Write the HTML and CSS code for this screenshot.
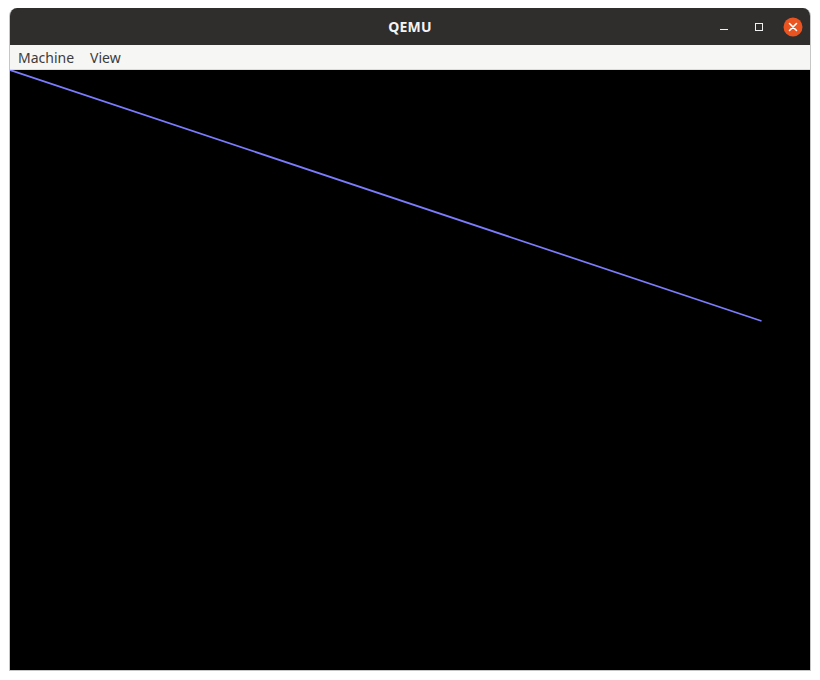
FILE: index.html
```html
<!DOCTYPE html>
<html>
<head>
<meta charset="utf-8">
<link rel="stylesheet" href="styles.css">
</head>
<body>
<div class="window">
  <div class="titlebar">
    <div class="title">QEMU</div>
    <div class="controls">
      <span class="btn min"><span class="min-bar"></span></span>
      <span class="btn max"><span class="max-box"></span></span>
      <span class="btn close">
        <svg width="20" height="20" viewBox="0 0 20 20"><circle cx="10" cy="10" r="9.5" fill="#e95420"/><path d="M6.5 6.5 L13.5 13.5 M13.5 6.5 L6.5 13.5" stroke="#fff" stroke-width="1.6" stroke-linecap="round"/></svg>
      </span>
    </div>
  </div>
  <div class="menubar">
    <span class="menu">Machine</span>
    <span class="menu">View</span>
  </div>
  <div class="screen">
    <svg width="800" height="600" viewBox="0 0 800 600"><line x1="0" y1="0" x2="751.5" y2="251" stroke="#7c7cff" stroke-width="1.7"/></svg>
  </div>
</div>
</body>
</html>
```

FILE: styles.css
```css
html, body { margin: 0; padding: 0; background: #ffffff; }
body { padding: 8px 0 0 9px; }
.window {
  width: 800px;
  border: 1px solid #c6c6c6;
  border-top: none;
  border-radius: 8px 8px 0 0;
  overflow: hidden;
  font-family: "Noto Sans", "Open Sans", sans-serif;
}
.titlebar {
  position: relative;
  height: 37px;
  background: #2f2e2d;
  display: flex;
  align-items: center;
  justify-content: center;
}
.title {
  color: #f4f4f4;
  font-weight: bold;
  font-size: 14px;
  letter-spacing: 0.2px;
}
.controls {
  position: absolute;
  right: 7px;
  top: 0;
  height: 37px;
  display: flex;
  align-items: center;
  gap: 14px;
}
.btn { display: flex; align-items: center; justify-content: center; width: 20px; height: 20px; }
.min-bar { display: block; width: 8px; height: 1.5px; background: #f0f0f0; margin-top: 6px; margin-right: 3px; }
.max-box { display: block; width: 6px; height: 6px; border: 1.3px solid #f0f0f0; }
.menubar {
  height: 24px;
  background: #f6f6f5;
  border-bottom: 1px solid #dcdcdc;
  display: flex;
  align-items: center;
  padding-left: 8px;
  gap: 16px;
}
.menu { font-size: 14px; color: #3c3c3c; }
.screen { width: 800px; height: 600px; background: #000; }
.screen svg { display: block; }
```
